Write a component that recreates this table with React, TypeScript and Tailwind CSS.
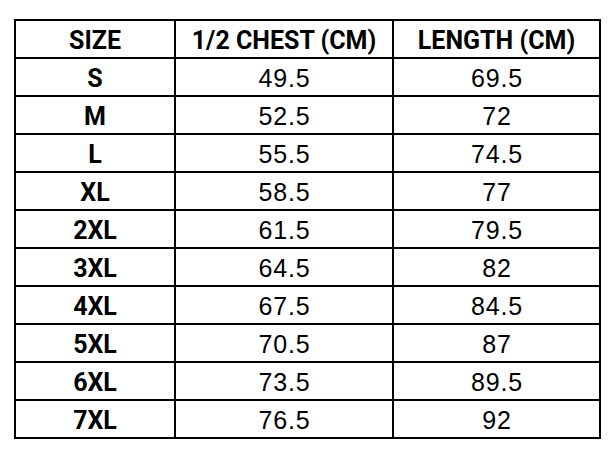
const rows = [
  ["S", "49.5", "69.5"],
  ["M", "52.5", "72"],
  ["L", "55.5", "74.5"],
  ["XL", "58.5", "77"],
  ["2XL", "61.5", "79.5"],
  ["3XL", "64.5", "82"],
  ["4XL", "67.5", "84.5"],
  ["5XL", "70.5", "87"],
  ["6XL", "73.5", "89.5"],
  ["7XL", "76.5", "92"],
];

const App = () => {
  return (
    <div className="min-h-screen w-full bg-white pl-[14px] pt-[19px]">
      <table className="border-collapse text-black">
        <colgroup>
          <col className="w-[160px]" />
          <col className="w-[218px]" />
          <col className="w-[207px]" />
        </colgroup>
        <thead>
          <tr className="h-[38px]">
            {["SIZE", "1/2 CHEST (CM)", "LENGTH (CM)"].map((h) => (
              <th
                key={h}
                className="border-2 border-black p-0 pt-[3px] text-center font-['Roboto',sans-serif] text-[25px] font-bold leading-none"
              >
                {h}
              </th>
            ))}
          </tr>
        </thead>
        <tbody>
          {rows.map(([size, chest, length]) => (
            <tr key={size} className="h-[38px]">
              <td className="border-2 border-black p-0 pt-[3px] text-center font-['Roboto',sans-serif] text-[25px] font-bold leading-none">
                {size}
              </td>
              <td className="border-2 border-black p-0 pl-[1px] pt-[3px] text-center font-['Liberation_Sans',Arial,sans-serif] text-[25px] leading-none tracking-[0.8px]">
                {chest}
              </td>
              <td className="border-2 border-black p-0 pl-[1px] pt-[3px] text-center font-['Liberation_Sans',Arial,sans-serif] text-[25px] leading-none tracking-[0.8px]">
                {length}
              </td>
            </tr>
          ))}
        </tbody>
      </table>
    </div>
  );
};

export default App;
